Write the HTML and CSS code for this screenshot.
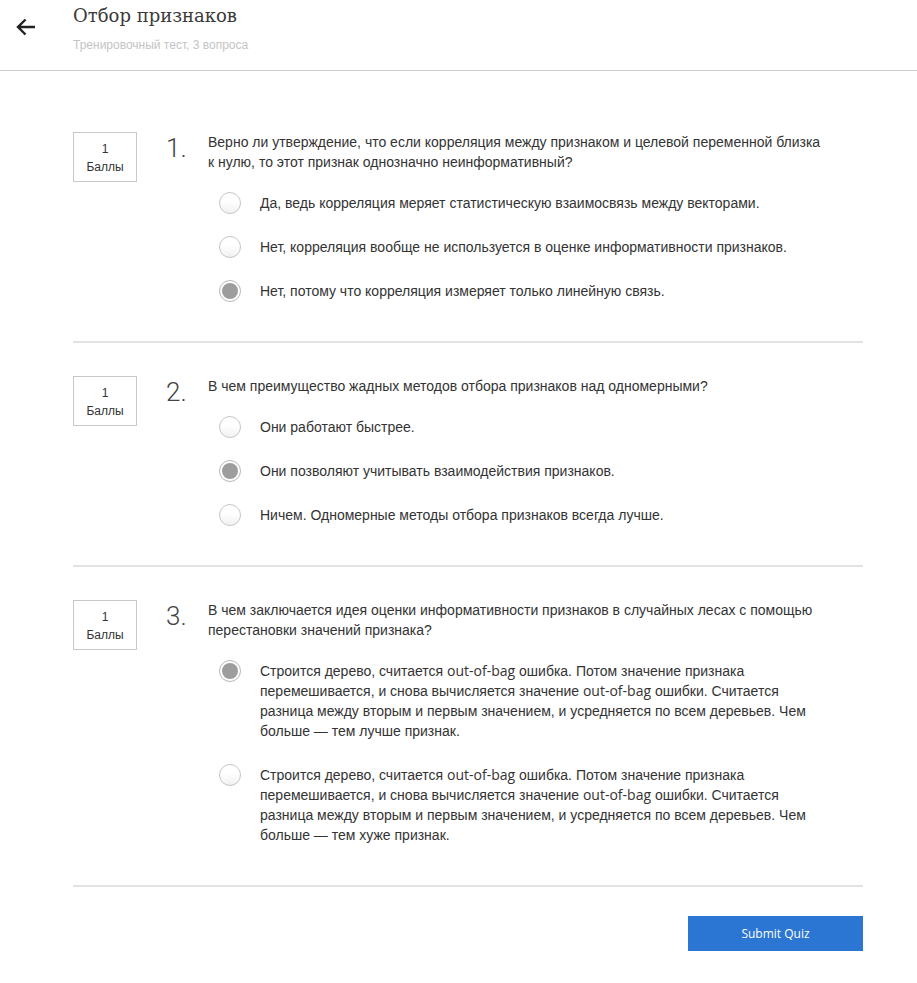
FILE: index.html
```html
<!DOCTYPE html>
<html lang="ru">
<head>
<meta charset="utf-8">
<title>Отбор признаков</title>
<link rel="stylesheet" href="styles.css">
</head>
<body>
<header class="header">
  <a class="back" href="#" aria-label="Назад">
    <svg width="26" height="26" viewBox="0 0 26 26"><path d="M22 13H5M12.5 5.5L5 13l7.5 7.5" fill="none" stroke="#222" stroke-width="2.4"/></svg>
  </a>
  <div class="head-text">
    <h1 class="title">Отбор признаков</h1>
    <div class="subtitle">Тренировочный тест, 3 вопроса</div>
  </div>
</header>
<main class="main">
  <section class="question">
    <div class="points"><span>1</span><span>Баллы</span></div>
    <div class="num">1.</div>
    <div class="body">
      <p class="qtext">Верно ли утверждение, что если корреляция между признаком и целевой переменной близка к нулю, то этот признак однозначно неинформативный?</p>
      <ul class="answers">
        <li class="answer"><span class="radio"></span><span class="atext">Да, ведь корреляция меряет статистическую взаимосвязь между векторами.</span></li>
        <li class="answer"><span class="radio"></span><span class="atext">Нет, корреляция вообще не используется в оценке информативности признаков.</span></li>
        <li class="answer"><span class="radio checked"></span><span class="atext">Нет, потому что корреляция измеряет только линейную связь.</span></li>
      </ul>
    </div>
  </section>
  <section class="question">
    <div class="points"><span>1</span><span>Баллы</span></div>
    <div class="num">2.</div>
    <div class="body">
      <p class="qtext">В чем преимущество жадных методов отбора признаков над одномерными?</p>
      <ul class="answers">
        <li class="answer"><span class="radio"></span><span class="atext">Они работают быстрее.</span></li>
        <li class="answer"><span class="radio checked"></span><span class="atext">Они позволяют учитывать взаимодействия признаков.</span></li>
        <li class="answer"><span class="radio"></span><span class="atext">Ничем. Одномерные методы отбора признаков всегда лучше.</span></li>
      </ul>
    </div>
  </section>
  <section class="question">
    <div class="points"><span>1</span><span>Баллы</span></div>
    <div class="num">3.</div>
    <div class="body">
      <p class="qtext">В чем заключается идея оценки информативности признаков в случайных лесах с помощью перестановки значений признака?</p>
      <ul class="answers">
        <li class="answer"><span class="radio checked"></span><span class="atext">Строится дерево, считается <span class="latin">out-of-bag</span> ошибка. Потом значение признака перемешивается, и снова вычисляется значение <span class="latin">out-of-bag</span> ошибки. Считается разница между вторым и первым значением, и усредняется по всем деревьев. Чем больше — тем лучше признак.</span></li>
        <li class="answer"><span class="radio"></span><span class="atext">Строится дерево, считается <span class="latin">out-of-bag</span> ошибка. Потом значение признака перемешивается, и снова вычисляется значение <span class="latin">out-of-bag</span> ошибки. Считается разница между вторым и первым значением, и усредняется по всем деревьев. Чем больше — тем хуже признак.</span></li>
      </ul>
    </div>
  </section>
  <div class="actions">
    <button class="submit" type="button">Submit Quiz</button>
  </div>
</main>
</body>
</html>
```
FILE: styles.css
```css
* { box-sizing: border-box; }
html, body { margin: 0; padding: 0; background: #fff; }
body {
  font-family: "Liberation Sans", Arial, sans-serif;
  color: #333;
  width: 917px;
}
.header {
  height: 71px;
  border-bottom: 1px solid #cfcfcf;
  display: flex;
  align-items: flex-start;
}
.back {
  display: block;
  width: 26px;
  height: 26px;
  margin: 14px 0 0 13px;
}
.back svg { display: block; }
.head-text { margin-left: 34px; padding-top: 4px; }
.title {
  margin: 0;
  font-family: "DejaVu Serif", Georgia, serif;
  font-weight: normal;
  font-size: 18px;
  line-height: 24px;
  color: #3a3a3a;
}
.subtitle {
  margin-top: 10px;
  font-size: 12px;
  line-height: 14px;
  color: #c4c4c4;
}
.main {
  width: 790px;
  margin-left: 73px;
  padding-top: 28px;
}
.question {
  display: flex;
  align-items: flex-start;
  padding: 33px 0 40px;
  border-bottom: 2px solid #e2e2e2;
}
.points {
  width: 64px;
  height: 50px;
  border: 1px solid #c8c8c8;
  display: flex;
  flex-direction: column;
  align-items: center;
  justify-content: center;
  font-size: 12px;
  line-height: 18px;
  padding-top: 1px;
  color: #333;
  flex: none;
}
.num {
  width: 71px;
  padding-left: 29px;
  font-family: Roboto, "Liberation Sans", sans-serif;
  font-weight: 300;
  font-size: 26px;
  line-height: 32px;
  color: #444;
  flex: none;
}
.body { width: 617px; flex: none; }
.qtext {
  margin: 0;
  font-size: 14px;
  line-height: 20px;
}
.answers {
  list-style: none;
  margin: 21px 0 0 11px;
  padding: 0;
  display: flex;
  flex-direction: column;
  gap: 24px;
}
.answer {
  display: flex;
  align-items: flex-start;
  gap: 19px;
  font-size: 14px;
  line-height: 20px;
}
.radio {
  flex: none;
  width: 22px;
  height: 22px;
  margin: -1px 0 -1px 0;
  border-radius: 50%;
  border: 1px solid #c6c6c6;
  background: linear-gradient(#fff 40%, #f1f1f1);
  position: relative;
}
.radio.checked {
  border-color: #b8b8b8;
  background: #fff;
}
.radio.checked::after {
  content: "";
  position: absolute;
  left: 2px;
  top: 2px;
  width: 16px;
  height: 16px;
  border-radius: 50%;
  background: #9d9d9d;
}
.atext { width: 560px; }
.latin { font-family: "Open Sans", sans-serif; line-height: 14px; }
.actions {
  display: flex;
  justify-content: flex-end;
  padding-top: 29px;
}
.submit {
  width: 175px;
  height: 35px;
  border: none;
  background: #2a76d2;
  color: #fff;
  font-family: "Open Sans", sans-serif;
  font-size: 12px;
  cursor: pointer;
}
```
